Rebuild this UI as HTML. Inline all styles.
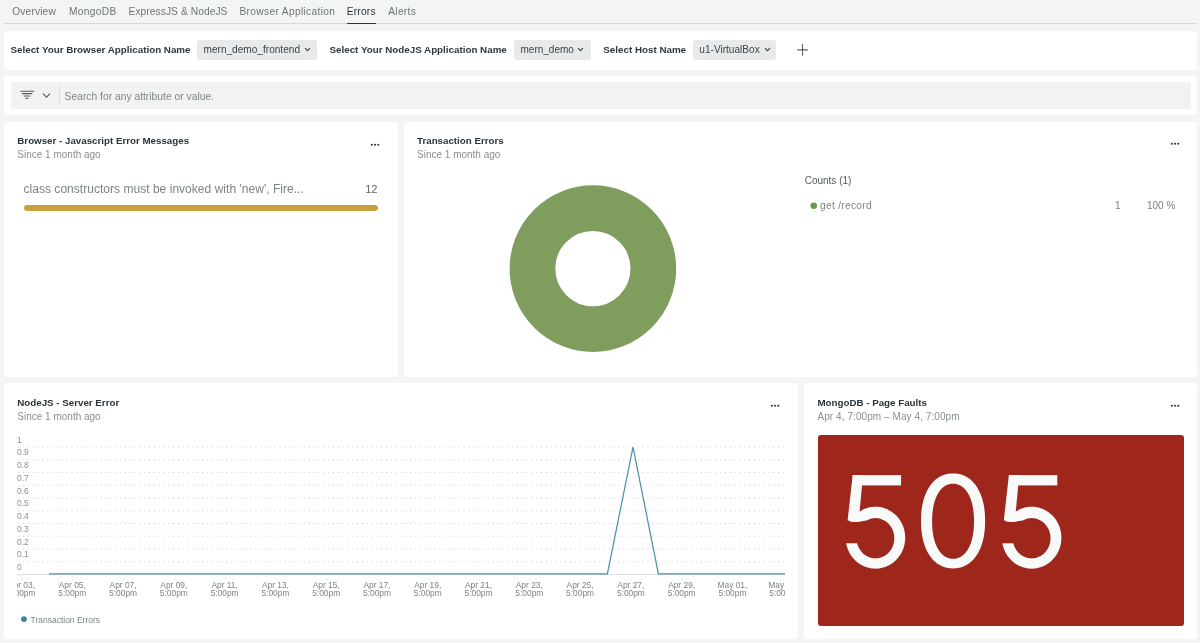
<!DOCTYPE html>
<html><head><meta charset="utf-8">
<style>
html,body{margin:0;padding:0;}
body{width:1200px;height:643px;overflow:hidden;background:#f3f4f4;position:relative;font-family:"Liberation Sans",sans-serif;}
.a{position:absolute;}
.t{position:absolute;white-space:nowrap;line-height:1;}
.box{position:absolute;background:#fff;border-radius:4px;}
.chip{position:absolute;background:#e7e9ea;border-radius:3px;}
</style></head><body><div style="position:absolute;left:0;top:0;width:1200px;height:643px;will-change:transform">

<!-- Tabs -->
<div class="t" style="left:12.3px;top:7.1px;font-size:10.2px;letter-spacing:0.14px;color:#6f7577">Overview</div>
<div class="t" style="left:69.0px;top:7.1px;font-size:10.2px;letter-spacing:0.33px;color:#6f7577">MongoDB</div>
<div class="t" style="left:128.5px;top:7.1px;font-size:10.2px;letter-spacing:0.09px;color:#6f7577">ExpressJS &amp; NodeJS</div>
<div class="t" style="left:239.5px;top:7.1px;font-size:10.2px;letter-spacing:0.33px;color:#6f7577">Browser Application</div>
<div class="t" style="left:346.7px;top:7.1px;font-size:10.2px;letter-spacing:0.22px;color:#293338">Errors</div>
<div class="t" style="left:388.3px;top:7.1px;font-size:10.2px;letter-spacing:0.28px;color:#6f7577">Alerts</div>
<div class="a" style="left:4px;top:22.8px;width:1193px;height:1px;background:#d5d8d9"></div>
<div class="a" style="left:347px;top:22.5px;width:28.5px;height:1.8px;background:#293338;border-radius:1px"></div>

<!-- Variables bar -->
<div class="box" style="left:4px;top:31px;width:1193px;height:38.5px"></div>
<div class="t" style="left:10.5px;top:45.2px;font-size:9.8px;font-weight:700;color:#2f383c">Select Your Browser Application Name</div>
<div class="chip" style="left:197px;top:40.3px;width:120px;height:19.7px"></div>
<div class="t" style="left:203.5px;top:44.6px;font-size:10.1px;color:#3d4548">mern_demo_frontend</div>
<svg class="a" style="left:304px;top:47px" width="7" height="5" viewBox="0 0 7 5"><path d="M1 1.2 L3.5 3.7 L6 1.2" fill="none" stroke="#3d4548" stroke-width="1.1"/></svg>

<div class="t" style="left:329.5px;top:45.2px;font-size:9.8px;font-weight:700;color:#2f383c">Select Your NodeJS Application Name</div>
<div class="chip" style="left:514px;top:40.3px;width:76.5px;height:19.7px"></div>
<div class="t" style="left:520.5px;top:44.6px;font-size:10px;color:#3d4548">mern_demo</div>
<svg class="a" style="left:577px;top:47px" width="7" height="5" viewBox="0 0 7 5"><path d="M1 1.2 L3.5 3.7 L6 1.2" fill="none" stroke="#3d4548" stroke-width="1.1"/></svg>

<div class="t" style="left:603.3px;top:45.2px;font-size:9.8px;font-weight:700;color:#2f383c">Select Host Name</div>
<div class="chip" style="left:693.3px;top:40.3px;width:83.2px;height:19.7px"></div>
<div class="t" style="left:699.3px;top:44.6px;font-size:10.1px;color:#3d4548">u1-VirtualBox</div>
<svg class="a" style="left:763.6px;top:47px" width="7" height="5" viewBox="0 0 7 5"><path d="M1 1.2 L3.5 3.7 L6 1.2" fill="none" stroke="#3d4548" stroke-width="1.1"/></svg>
<svg class="a" style="left:796px;top:44px" width="13" height="13" viewBox="0 0 13 13"><path d="M6.5 0 V11.75 M1.2 5.9 H11.8" fill="none" stroke="#5b6366" stroke-width="1.1"/></svg>

<!-- Filter bar -->
<div class="box" style="left:4px;top:76px;width:1193px;height:39.3px"></div>
<div class="a" style="left:11px;top:82.4px;width:1179.7px;height:26.2px;background:#f1f2f2;border-radius:2px"></div>
<svg class="a" style="left:20px;top:90px" width="15" height="10" viewBox="0 0 15 10"><path d="M0.7 1.3 H13.8 M2.2 3.6 H12 M4 5.9 H9.7 M5.6 8.3 H8.2" fill="none" stroke="#555d60" stroke-width="1.05" stroke-linecap="round"/></svg>
<svg class="a" style="left:42px;top:92px" width="9" height="7" viewBox="0 0 9 7"><path d="M1 1.6 L4.5 5.2 L8 1.6" fill="none" stroke="#555d60" stroke-width="1.1"/></svg>
<div class="a" style="left:59px;top:86px;width:1px;height:19px;background:#dcdfe0"></div>
<div class="t" style="left:64.6px;top:92.2px;font-size:10.3px;color:#80878a">Search for any attribute or value.</div>

<!-- Panel A -->
<div class="box" style="left:4px;top:122px;width:394px;height:255px"></div>
<div class="t" style="left:17.3px;top:135.9px;font-size:9.75px;font-weight:700;color:#293338">Browser - Javascript Error Messages</div>
<div class="t" style="left:17.3px;top:149.8px;font-size:10px;color:#898f92">Since 1 month ago</div>
<svg class="a" style="left:368.8px;top:141.5px" width="14" height="6" viewBox="368.8 141.5 14 6"><circle cx="371.65" cy="144.25" r="1.05" fill="#2e373b"/><circle cx="374.85" cy="144.25" r="1.05" fill="#2e373b"/><circle cx="378.05" cy="144.25" r="1.05" fill="#2e373b"/></svg>
<div class="t" style="left:23.5px;top:183.1px;font-size:12px;letter-spacing:0.03px;color:#7d8385">class constructors must be invoked with 'new', Fire...</div>
<div class="t" style="left:300px;width:77.6px;text-align:right;top:183.9px;font-size:11.2px;color:#5f6668">12</div>
<div class="a" style="left:24px;top:204.6px;width:353.7px;height:6.2px;background:#c9a03e;border-radius:3px"></div>

<!-- Panel B -->
<div class="box" style="left:404px;top:122px;width:793px;height:255px"></div>
<div class="t" style="left:417px;top:135.9px;font-size:9.75px;font-weight:700;color:#293338">Transaction Errors</div>
<div class="t" style="left:417px;top:149.8px;font-size:10px;color:#898f92">Since 1 month ago</div>
<svg class="a" style="left:1168.6px;top:141.2px" width="14" height="6" viewBox="1168.6 141.2 14 6"><circle cx="1171.45" cy="143.95" r="1.05" fill="#2e373b"/><circle cx="1174.65" cy="143.95" r="1.05" fill="#2e373b"/><circle cx="1177.85" cy="143.95" r="1.05" fill="#2e373b"/></svg>
<svg class="a" style="left:504px;top:180px" width="180" height="180" viewBox="0 0 180 180"><circle cx="88.9" cy="88.6" r="60.45" fill="none" stroke="#7f9e5e" stroke-width="45.7"/></svg>
<div class="t" style="left:804.7px;top:175.9px;font-size:10px;color:#525a5d">Counts (1)</div>
<svg class="a" style="left:808px;top:200px" width="12" height="12" viewBox="808 200 12 12"><circle cx="813.75" cy="205.65" r="3.25" fill="#6b9a48"/></svg>
<div class="t" style="left:820px;top:201px;font-size:10.2px;letter-spacing:0.3px;color:#7d8385">get /record</div>
<div class="t" style="left:1115px;top:200.7px;font-size:10px;color:#7d8385">1</div>
<div class="t" style="left:1147px;top:200.7px;font-size:10px;color:#7d8385">100 %</div>

<!-- Panel C -->
<div class="box" style="left:4px;top:383px;width:794px;height:255.7px"></div>
<div class="t" style="left:17.3px;top:397.5px;font-size:9.75px;font-weight:700;color:#293338">NodeJS - Server Error</div>
<div class="t" style="left:17.3px;top:412px;font-size:10px;color:#898f92">Since 1 month ago</div>
<svg class="a" style="left:769.0px;top:403.1px" width="14" height="6" viewBox="769.0 403.1 14 6"><circle cx="771.85" cy="405.85" r="1.05" fill="#2e373b"/><circle cx="775.05" cy="405.85" r="1.05" fill="#2e373b"/><circle cx="778.25" cy="405.85" r="1.05" fill="#2e373b"/></svg>
<svg id="chart" class="a" style="left:0;top:430px;font-family:'Liberation Sans',sans-serif" width="798" height="200" viewBox="0 430 798 200"><defs><clipPath id="cl"><rect x="17" y="430" width="768.5" height="200"/></clipPath></defs><line x1="18.1" y1="561.74" x2="785" y2="561.74" stroke="#d3d6d7" stroke-width="1" stroke-dasharray="1.3 3.54"/><line x1="18.1" y1="548.98" x2="785" y2="548.98" stroke="#d3d6d7" stroke-width="1" stroke-dasharray="1.3 3.54"/><line x1="18.1" y1="536.22" x2="785" y2="536.22" stroke="#d3d6d7" stroke-width="1" stroke-dasharray="1.3 3.54"/><line x1="18.1" y1="523.46" x2="785" y2="523.46" stroke="#d3d6d7" stroke-width="1" stroke-dasharray="1.3 3.54"/><line x1="18.1" y1="510.70" x2="785" y2="510.70" stroke="#d3d6d7" stroke-width="1" stroke-dasharray="1.3 3.54"/><line x1="18.1" y1="497.94" x2="785" y2="497.94" stroke="#d3d6d7" stroke-width="1" stroke-dasharray="1.3 3.54"/><line x1="18.1" y1="485.18" x2="785" y2="485.18" stroke="#d3d6d7" stroke-width="1" stroke-dasharray="1.3 3.54"/><line x1="18.1" y1="472.42" x2="785" y2="472.42" stroke="#d3d6d7" stroke-width="1" stroke-dasharray="1.3 3.54"/><line x1="18.1" y1="459.66" x2="785" y2="459.66" stroke="#d3d6d7" stroke-width="1" stroke-dasharray="1.3 3.54"/><line x1="18.1" y1="446.90" x2="785" y2="446.90" stroke="#d3d6d7" stroke-width="1" stroke-dasharray="1.3 3.54"/><text x="17" y="570.20" font-size="8.4" fill="#8a9093">0</text><text x="17" y="557.44" font-size="8.4" fill="#8a9093">0.1</text><text x="17" y="544.68" font-size="8.4" fill="#8a9093">0.2</text><text x="17" y="531.92" font-size="8.4" fill="#8a9093">0.3</text><text x="17" y="519.16" font-size="8.4" fill="#8a9093">0.4</text><text x="17" y="506.40" font-size="8.4" fill="#8a9093">0.5</text><text x="17" y="493.64" font-size="8.4" fill="#8a9093">0.6</text><text x="17" y="480.88" font-size="8.4" fill="#8a9093">0.7</text><text x="17" y="468.12" font-size="8.4" fill="#8a9093">0.8</text><text x="17" y="455.36" font-size="8.4" fill="#8a9093">0.9</text><text x="17" y="442.60" font-size="8.4" fill="#8a9093">1</text><line x1="17" y1="574.5" x2="785" y2="574.5" stroke="#dfe1e2" stroke-width="1"/><g clip-path="url(#cl)"><rect x="21.90" y="578.9" width="1" height="1" fill="#cfd3d4"/><text x="21.50" y="588.3" font-size="8.4" fill="#7d8385" text-anchor="middle">Apr 03,</text><text x="21.50" y="596" font-size="8.4" fill="#7d8385" text-anchor="middle">5:00pm</text><rect x="72.68" y="578.9" width="1" height="1" fill="#cfd3d4"/><text x="72.28" y="588.3" font-size="8.4" fill="#7d8385" text-anchor="middle">Apr 05,</text><text x="72.28" y="596" font-size="8.4" fill="#7d8385" text-anchor="middle">5:00pm</text><rect x="123.46" y="578.9" width="1" height="1" fill="#cfd3d4"/><text x="123.06" y="588.3" font-size="8.4" fill="#7d8385" text-anchor="middle">Apr 07,</text><text x="123.06" y="596" font-size="8.4" fill="#7d8385" text-anchor="middle">5:00pm</text><rect x="174.24" y="578.9" width="1" height="1" fill="#cfd3d4"/><text x="173.84" y="588.3" font-size="8.4" fill="#7d8385" text-anchor="middle">Apr 09,</text><text x="173.84" y="596" font-size="8.4" fill="#7d8385" text-anchor="middle">5:00pm</text><rect x="225.02" y="578.9" width="1" height="1" fill="#cfd3d4"/><text x="224.62" y="588.3" font-size="8.4" fill="#7d8385" text-anchor="middle">Apr 11,</text><text x="224.62" y="596" font-size="8.4" fill="#7d8385" text-anchor="middle">5:00pm</text><rect x="275.80" y="578.9" width="1" height="1" fill="#cfd3d4"/><text x="275.40" y="588.3" font-size="8.4" fill="#7d8385" text-anchor="middle">Apr 13,</text><text x="275.40" y="596" font-size="8.4" fill="#7d8385" text-anchor="middle">5:00pm</text><rect x="326.58" y="578.9" width="1" height="1" fill="#cfd3d4"/><text x="326.18" y="588.3" font-size="8.4" fill="#7d8385" text-anchor="middle">Apr 15,</text><text x="326.18" y="596" font-size="8.4" fill="#7d8385" text-anchor="middle">5:00pm</text><rect x="377.36" y="578.9" width="1" height="1" fill="#cfd3d4"/><text x="376.96" y="588.3" font-size="8.4" fill="#7d8385" text-anchor="middle">Apr 17,</text><text x="376.96" y="596" font-size="8.4" fill="#7d8385" text-anchor="middle">5:00pm</text><rect x="428.14" y="578.9" width="1" height="1" fill="#cfd3d4"/><text x="427.74" y="588.3" font-size="8.4" fill="#7d8385" text-anchor="middle">Apr 19,</text><text x="427.74" y="596" font-size="8.4" fill="#7d8385" text-anchor="middle">5:00pm</text><rect x="478.92" y="578.9" width="1" height="1" fill="#cfd3d4"/><text x="478.52" y="588.3" font-size="8.4" fill="#7d8385" text-anchor="middle">Apr 21,</text><text x="478.52" y="596" font-size="8.4" fill="#7d8385" text-anchor="middle">5:00pm</text><rect x="529.70" y="578.9" width="1" height="1" fill="#cfd3d4"/><text x="529.30" y="588.3" font-size="8.4" fill="#7d8385" text-anchor="middle">Apr 23,</text><text x="529.30" y="596" font-size="8.4" fill="#7d8385" text-anchor="middle">5:00pm</text><rect x="580.48" y="578.9" width="1" height="1" fill="#cfd3d4"/><text x="580.08" y="588.3" font-size="8.4" fill="#7d8385" text-anchor="middle">Apr 25,</text><text x="580.08" y="596" font-size="8.4" fill="#7d8385" text-anchor="middle">5:00pm</text><rect x="631.26" y="578.9" width="1" height="1" fill="#cfd3d4"/><text x="630.86" y="588.3" font-size="8.4" fill="#7d8385" text-anchor="middle">Apr 27,</text><text x="630.86" y="596" font-size="8.4" fill="#7d8385" text-anchor="middle">5:00pm</text><rect x="682.04" y="578.9" width="1" height="1" fill="#cfd3d4"/><text x="681.64" y="588.3" font-size="8.4" fill="#7d8385" text-anchor="middle">Apr 29,</text><text x="681.64" y="596" font-size="8.4" fill="#7d8385" text-anchor="middle">5:00pm</text><rect x="732.82" y="578.9" width="1" height="1" fill="#cfd3d4"/><text x="732.42" y="588.3" font-size="8.4" fill="#7d8385" text-anchor="middle">May 01,</text><text x="732.42" y="596" font-size="8.4" fill="#7d8385" text-anchor="middle">5:00pm</text><rect x="783.60" y="578.9" width="1" height="1" fill="#cfd3d4"/><text x="783.20" y="588.3" font-size="8.4" fill="#7d8385" text-anchor="middle">May 03,</text><text x="783.20" y="596" font-size="8.4" fill="#7d8385" text-anchor="middle">5:00pm</text></g><path d="M49 573.8 L607.4 573.8 L633 447 L658.4 573.8 L785 573.8" fill="none" stroke="#4f90aa" stroke-width="1.25" stroke-linejoin="miter"/></svg>
<svg class="a" style="left:18px;top:613px" width="12" height="12" viewBox="18 613 12 12"><circle cx="23.95" cy="619.1" r="2.95" fill="#3c84a0"/></svg>
<div class="t" style="left:30.5px;top:615.5px;font-size:8.5px;color:#7d8385">Transaction Errors</div>

<!-- Panel D -->
<div class="box" style="left:804px;top:383px;width:393px;height:255.7px"></div>
<div class="t" style="left:817.5px;top:397.8px;font-size:9.75px;font-weight:700;color:#293338">MongoDB - Page Faults</div>
<div class="t" style="left:817.5px;top:412px;font-size:10px;letter-spacing:0.07px;color:#898f92">Apr 4, 7:00pm – May 4, 7:00pm</div>
<svg class="a" style="left:1168.6px;top:403.2px" width="14" height="6" viewBox="1168.6 403.2 14 6"><circle cx="1171.45" cy="405.95" r="1.05" fill="#2e373b"/><circle cx="1174.65" cy="405.95" r="1.05" fill="#2e373b"/><circle cx="1177.85" cy="405.95" r="1.05" fill="#2e373b"/></svg>
<div class="a" style="left:817.7px;top:435.2px;width:366.6px;height:190.7px;background:#9e261b;border-radius:3px"></div>
<svg id="big505" class="a" style="left:817px;top:435px" width="368" height="191" viewBox="817 435 368 191"><path d="M905.20 537.70 L905.14 539.72 L904.95 541.74 L904.63 543.74 L904.19 545.71 L903.62 547.65 L902.94 549.54 L902.13 551.39 L901.21 553.18 L900.19 554.89 L899.05 556.54 L897.82 558.11 L896.49 559.58 L895.07 560.97 L893.56 562.25 L891.98 563.43 L890.33 564.50 L888.61 565.46 L886.83 566.29 L885.01 567.01 L883.15 567.60 L881.25 568.06 L879.33 568.39 L877.40 568.58 L875.45 568.65 L873.50 568.58 L871.57 568.39 L869.65 568.06 L867.75 567.60 L865.89 567.01 L864.07 566.29 L862.29 565.46 L860.58 564.50 L858.92 563.43 L857.34 562.25 L855.83 560.97 L854.41 559.58 L853.08 558.11 L851.85 556.54 L850.71 554.89 L849.69 553.18 L848.77 551.39 L847.96 549.54 L847.28 547.65 L846.71 545.71 L846.27 543.74 L845.95 541.74 L845.76 539.72 L845.70 537.70 L845.76 535.68 L845.95 533.66 L846.27 531.66 L846.71 529.69 L847.28 527.75 L847.96 525.86 L848.77 524.01 L849.69 522.23 L850.71 520.51 L851.85 518.86 L853.08 517.29 L854.41 515.82 L855.83 514.43 L857.34 513.15 L858.92 511.97 L860.58 510.90 L862.29 509.94 L864.07 509.11 L865.89 508.39 L867.75 507.80 L869.65 507.34 L871.57 507.01 L873.50 506.82 L875.45 506.75 L877.40 506.82 L879.33 507.01 L881.25 507.34 L883.15 507.80 L885.01 508.39 L886.83 509.11 L888.61 509.94 L890.33 510.90 L891.98 511.97 L893.56 513.15 L895.07 514.43 L896.49 515.82 L897.82 517.29 L899.05 518.86 L900.19 520.51 L901.21 522.23 L902.13 524.01 L902.94 525.86 L903.62 527.75 L904.19 529.69 L904.63 531.66 L904.95 533.66 L905.14 535.68 Z M894.30 538.25 L894.26 539.57 L894.14 540.88 L893.94 542.18 L893.66 543.47 L893.30 544.73 L892.87 545.96 L892.36 547.16 L891.77 548.33 L891.12 549.44 L890.40 550.52 L889.62 551.54 L888.78 552.50 L887.88 553.40 L886.93 554.24 L885.92 555.00 L884.88 555.70 L883.79 556.32 L882.66 556.87 L881.51 557.33 L880.33 557.71 L879.13 558.01 L877.91 558.23 L876.68 558.36 L875.45 558.40 L874.22 558.36 L872.99 558.23 L871.77 558.01 L870.57 557.71 L869.39 557.33 L868.24 556.87 L867.11 556.32 L866.03 555.70 L864.98 555.00 L863.97 554.24 L863.02 553.40 L862.12 552.50 L861.28 551.54 L860.50 550.52 L859.78 549.44 L859.13 548.33 L858.54 547.16 L858.03 545.96 L857.60 544.73 L857.24 543.47 L856.96 542.18 L856.76 540.88 L856.64 539.57 L856.60 538.25 L856.64 536.93 L856.76 535.62 L856.96 534.32 L857.24 533.03 L857.60 531.77 L858.03 530.54 L858.54 529.34 L859.13 528.17 L859.78 527.06 L860.50 525.98 L861.28 524.96 L862.12 524.00 L863.02 523.10 L863.97 522.26 L864.98 521.50 L866.03 520.80 L867.11 520.18 L868.24 519.63 L869.39 519.17 L870.57 518.79 L871.77 518.49 L872.99 518.27 L874.22 518.14 L875.45 518.10 L876.68 518.14 L877.91 518.27 L879.13 518.49 L880.33 518.79 L881.51 519.17 L882.66 519.63 L883.79 520.18 L884.88 520.80 L885.92 521.50 L886.93 522.26 L887.88 523.10 L888.78 524.00 L889.62 524.96 L890.40 525.98 L891.12 527.06 L891.77 528.17 L892.36 529.34 L892.87 530.54 L893.30 531.77 L893.66 533.03 L893.94 534.32 L894.14 535.62 L894.26 536.93 Z" fill="#f8f9f9" fill-rule="evenodd"/><path d="M838 521.6 L858.3 521.9 L866 520.4 L866 543.35 L838 543.35 Z" fill="#9e261b"/><rect x="852.7" y="475.1" width="48.35" height="10.3" fill="#f8f9f9"/><path d="M852.7 475.1 L863.0 475.1 L858.6 521.9 L847.6 520.4 Z" fill="#f8f9f9"/><path d="M985.10 520.95 L985.04 524.93 L984.85 528.40 L984.54 531.69 L984.11 534.84 L983.55 537.86 L982.87 540.77 L982.08 543.55 L981.17 546.22 L980.15 548.76 L979.02 551.17 L977.78 553.44 L976.44 555.58 L975.00 557.56 L973.46 559.40 L971.83 561.07 L970.12 562.58 L968.32 563.93 L966.43 565.10 L964.47 566.11 L962.43 566.93 L960.30 567.57 L958.08 568.03 L955.74 568.31 L953.05 568.40 L950.36 568.31 L948.02 568.03 L945.80 567.57 L943.67 566.93 L941.63 566.11 L939.67 565.10 L937.78 563.93 L935.98 562.58 L934.27 561.07 L932.64 559.40 L931.10 557.56 L929.66 555.58 L928.32 553.44 L927.08 551.17 L925.95 548.76 L924.93 546.22 L924.02 543.55 L923.23 540.77 L922.55 537.86 L921.99 534.84 L921.56 531.69 L921.25 528.40 L921.06 524.93 L921.00 520.95 L921.06 516.97 L921.25 513.50 L921.56 510.21 L921.99 507.06 L922.55 504.04 L923.23 501.13 L924.02 498.35 L924.93 495.68 L925.95 493.14 L927.08 490.73 L928.32 488.46 L929.66 486.32 L931.10 484.34 L932.64 482.50 L934.27 480.83 L935.98 479.32 L937.78 477.97 L939.67 476.80 L941.63 475.79 L943.67 474.97 L945.80 474.33 L948.02 473.87 L950.36 473.59 L953.05 473.50 L955.74 473.59 L958.08 473.87 L960.30 474.33 L962.43 474.97 L964.47 475.79 L966.43 476.80 L968.32 477.97 L970.12 479.32 L971.83 480.83 L973.46 482.50 L975.00 484.34 L976.44 486.32 L977.78 488.46 L979.02 490.73 L980.15 493.14 L981.17 495.68 L982.08 498.35 L982.87 501.13 L983.55 504.04 L984.11 507.06 L984.54 510.21 L984.85 513.50 L985.04 516.97 Z M974.00 521.25 L973.96 524.39 L973.84 527.13 L973.63 529.73 L973.35 532.21 L972.99 534.60 L972.55 536.89 L972.03 539.09 L971.43 541.19 L970.76 543.20 L970.02 545.10 L969.21 546.90 L968.34 548.58 L967.40 550.15 L966.39 551.59 L965.33 552.92 L964.21 554.11 L963.03 555.17 L961.80 556.10 L960.52 556.89 L959.18 557.54 L957.79 558.05 L956.34 558.41 L954.81 558.63 L953.05 558.70 L951.29 558.63 L949.76 558.41 L948.31 558.05 L946.92 557.54 L945.58 556.89 L944.30 556.10 L943.07 555.17 L941.89 554.11 L940.77 552.92 L939.71 551.59 L938.70 550.15 L937.76 548.58 L936.89 546.90 L936.08 545.10 L935.34 543.20 L934.67 541.19 L934.07 539.09 L933.55 536.89 L933.11 534.60 L932.75 532.21 L932.47 529.73 L932.26 527.13 L932.14 524.39 L932.10 521.25 L932.14 518.11 L932.26 515.37 L932.47 512.77 L932.75 510.29 L933.11 507.90 L933.55 505.61 L934.07 503.41 L934.67 501.31 L935.34 499.30 L936.08 497.40 L936.89 495.60 L937.76 493.92 L938.70 492.35 L939.71 490.91 L940.77 489.58 L941.89 488.39 L943.07 487.33 L944.30 486.40 L945.58 485.61 L946.92 484.96 L948.31 484.45 L949.76 484.09 L951.29 483.87 L953.05 483.80 L954.81 483.87 L956.34 484.09 L957.79 484.45 L959.18 484.96 L960.52 485.61 L961.80 486.40 L963.03 487.33 L964.21 488.39 L965.33 489.58 L966.39 490.91 L967.40 492.35 L968.34 493.92 L969.21 495.60 L970.02 497.40 L970.76 499.30 L971.43 501.31 L972.03 503.41 L972.55 505.61 L972.99 507.90 L973.35 510.29 L973.63 512.77 L973.84 515.37 L973.96 518.11 Z" fill="#f8f9f9" fill-rule="evenodd"/><path d="M1061.40 537.70 L1061.34 539.72 L1061.15 541.74 L1060.83 543.74 L1060.39 545.71 L1059.82 547.65 L1059.14 549.54 L1058.33 551.39 L1057.41 553.18 L1056.39 554.89 L1055.25 556.54 L1054.02 558.11 L1052.69 559.58 L1051.27 560.97 L1049.76 562.25 L1048.18 563.43 L1046.53 564.50 L1044.81 565.46 L1043.03 566.29 L1041.21 567.01 L1039.35 567.60 L1037.45 568.06 L1035.53 568.39 L1033.60 568.58 L1031.65 568.65 L1029.70 568.58 L1027.77 568.39 L1025.85 568.06 L1023.95 567.60 L1022.09 567.01 L1020.27 566.29 L1018.49 565.46 L1016.78 564.50 L1015.12 563.43 L1013.54 562.25 L1012.03 560.97 L1010.61 559.58 L1009.28 558.11 L1008.05 556.54 L1006.91 554.89 L1005.89 553.18 L1004.97 551.39 L1004.16 549.54 L1003.48 547.65 L1002.91 545.71 L1002.47 543.74 L1002.15 541.74 L1001.96 539.72 L1001.90 537.70 L1001.96 535.68 L1002.15 533.66 L1002.47 531.66 L1002.91 529.69 L1003.48 527.75 L1004.16 525.86 L1004.97 524.01 L1005.89 522.23 L1006.91 520.51 L1008.05 518.86 L1009.28 517.29 L1010.61 515.82 L1012.03 514.43 L1013.54 513.15 L1015.12 511.97 L1016.78 510.90 L1018.49 509.94 L1020.27 509.11 L1022.09 508.39 L1023.95 507.80 L1025.85 507.34 L1027.77 507.01 L1029.70 506.82 L1031.65 506.75 L1033.60 506.82 L1035.53 507.01 L1037.45 507.34 L1039.35 507.80 L1041.21 508.39 L1043.03 509.11 L1044.81 509.94 L1046.53 510.90 L1048.18 511.97 L1049.76 513.15 L1051.27 514.43 L1052.69 515.82 L1054.02 517.29 L1055.25 518.86 L1056.39 520.51 L1057.41 522.23 L1058.33 524.01 L1059.14 525.86 L1059.82 527.75 L1060.39 529.69 L1060.83 531.66 L1061.15 533.66 L1061.34 535.68 Z M1050.50 538.25 L1050.46 539.57 L1050.34 540.88 L1050.14 542.18 L1049.86 543.47 L1049.50 544.73 L1049.07 545.96 L1048.56 547.16 L1047.97 548.33 L1047.32 549.44 L1046.60 550.52 L1045.82 551.54 L1044.98 552.50 L1044.08 553.40 L1043.13 554.24 L1042.12 555.00 L1041.08 555.70 L1039.99 556.32 L1038.86 556.87 L1037.71 557.33 L1036.53 557.71 L1035.33 558.01 L1034.11 558.23 L1032.88 558.36 L1031.65 558.40 L1030.42 558.36 L1029.19 558.23 L1027.97 558.01 L1026.77 557.71 L1025.59 557.33 L1024.44 556.87 L1023.31 556.32 L1022.23 555.70 L1021.18 555.00 L1020.17 554.24 L1019.22 553.40 L1018.32 552.50 L1017.48 551.54 L1016.70 550.52 L1015.98 549.44 L1015.33 548.33 L1014.74 547.16 L1014.23 545.96 L1013.80 544.73 L1013.44 543.47 L1013.16 542.18 L1012.96 540.88 L1012.84 539.57 L1012.80 538.25 L1012.84 536.93 L1012.96 535.62 L1013.16 534.32 L1013.44 533.03 L1013.80 531.77 L1014.23 530.54 L1014.74 529.34 L1015.33 528.17 L1015.98 527.06 L1016.70 525.98 L1017.48 524.96 L1018.32 524.00 L1019.22 523.10 L1020.17 522.26 L1021.18 521.50 L1022.23 520.80 L1023.31 520.18 L1024.44 519.63 L1025.59 519.17 L1026.77 518.79 L1027.97 518.49 L1029.19 518.27 L1030.42 518.14 L1031.65 518.10 L1032.88 518.14 L1034.11 518.27 L1035.33 518.49 L1036.53 518.79 L1037.71 519.17 L1038.86 519.63 L1039.99 520.18 L1041.08 520.80 L1042.12 521.50 L1043.13 522.26 L1044.08 523.10 L1044.98 524.00 L1045.82 524.96 L1046.60 525.98 L1047.32 527.06 L1047.97 528.17 L1048.56 529.34 L1049.07 530.54 L1049.50 531.77 L1049.86 533.03 L1050.14 534.32 L1050.34 535.62 L1050.46 536.93 Z" fill="#f8f9f9" fill-rule="evenodd"/><path d="M994.2 521.6 L1014.5 521.9 L1022.2 520.4 L1022.2 543.35 L994.2 543.35 Z" fill="#9e261b"/><rect x="1008.9000000000001" y="475.1" width="48.35" height="10.3" fill="#f8f9f9"/><path d="M1008.9000000000001 475.1 L1019.2 475.1 L1014.8 521.9 L1003.8 520.4 Z" fill="#f8f9f9"/></svg>




</div></body></html>
